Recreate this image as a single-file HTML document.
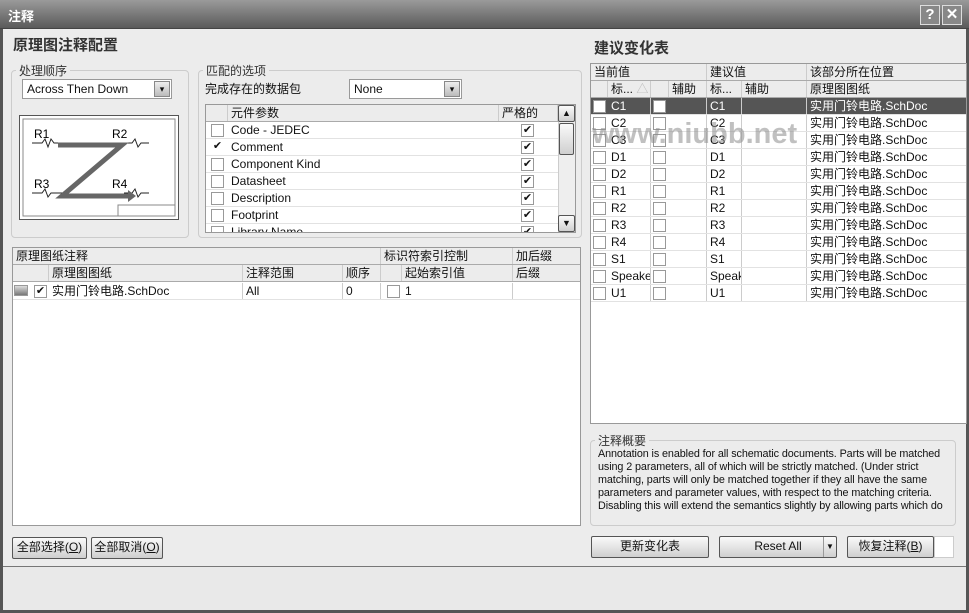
<!DOCTYPE html>
<html><head><meta charset="utf-8"><style>
*{box-sizing:border-box;margin:0;padding:0}
body{width:969px;height:613px;background:#ececec;font-family:"Liberation Sans","Noto Sans CJK SC",sans-serif;font-size:12px;color:#111;position:relative;overflow:hidden}
.a{position:absolute}
.tb{left:0;top:0;width:969px;height:29px;background:linear-gradient(#9a9a9a,#5a5a5a);border-bottom:1px solid #444}
.frame{left:0;top:29px;width:969px;height:584px;border-left:3px solid #555;border-right:3px solid #555;border-bottom:3px solid #555}
.grp{border:1px solid #ccc;border-radius:4px}
.gl{background:#ececec;padding:0 3px;color:#333;font-size:12px}
.combo{background:#fff;border:1px solid #999;height:20px;line-height:18px;padding-left:4px}
.dd{position:absolute;right:1px;top:1px;width:16px;height:16px;background:linear-gradient(#eee,#bbb);border:1px solid #888;font-size:9px;text-align:center;line-height:14px}
.white{background:#fff;border:1px solid #999}
.row{position:absolute;left:0;right:0;height:17px;border-bottom:1px solid #e2e2e2;line-height:16px;white-space:nowrap;overflow:hidden}
.hd{background:#ececec;border-bottom:1px solid #aaa}
.cell{position:absolute;top:0;height:17px;padding-left:3px;overflow:hidden;border-right:1px solid #ccc}
.cb{position:absolute;width:13px;height:13px;border:1px solid #999;background:#fff;top:2px;font-size:11px;line-height:11px;text-align:center}
.btn{background:linear-gradient(#fafafa,#cfcfcf);border:1px solid #555;border-radius:2px;text-align:center;line-height:19px;height:22px}
</style></head><body>
<div class="a tb"></div>
<div class="a" style="left:8px;top:6px;color:#fff;font-weight:bold;font-size:13px">注释</div>
<div class="a" style="left:920px;top:5px;width:20px;height:20px;border:1px solid #ddd;background:#888;color:#fff;font-weight:bold;text-align:center;line-height:18px;font-size:15px">?</div>
<div class="a" style="left:942px;top:5px;width:20px;height:20px;border:1px solid #ddd;background:#888;color:#fff;font-weight:bold;text-align:center;line-height:18px;font-size:15px">✕</div>
<div class="a frame"></div>

<div class="a" style="left:13px;top:34px;font-size:15px;font-weight:bold;color:#333">原理图注释配置</div>
<div class="a" style="left:594px;top:37px;font-size:15px;font-weight:bold;color:#333">建议变化表</div>

<!-- group 处理顺序 -->
<div class="a grp" style="left:11px;top:70px;width:178px;height:168px"></div>
<div class="a gl" style="left:16px;top:62px">处理顺序</div>
<div class="a combo" style="left:22px;top:79px;width:150px">Across Then Down<div class="dd">▾</div></div>
<div class="a" style="left:19px;top:115px;width:160px;height:105px;border:1px solid #555;background:#fff">
<svg width="158" height="103" viewBox="0 0 158 103">
<rect x="3" y="3" width="152" height="97" fill="none" stroke="#888"/>
<text x="14" y="22" font-size="12" font-family="Liberation Sans">R1</text>
<text x="92" y="22" font-size="12" font-family="Liberation Sans">R2</text>
<text x="14" y="72" font-size="12" font-family="Liberation Sans">R3</text>
<text x="92" y="72" font-size="12" font-family="Liberation Sans">R4</text>
<path d="M12 27h10l3 -4 3 8 3 -8 3 4h8M104 27h8l3 -4 3 8 3 -4h8M12 77h10l3 -4 3 8 3 -4h12M104 77h8l3 -4 3 8 3 -4h8" fill="none" stroke="#222"/>
<path d="M38 29H102L42 80H112" fill="none" stroke="#666" stroke-width="5"/>
<path d="M108 74l8 6-8 6z" fill="#666"/>
<rect x="98" y="89" width="57" height="11" fill="#fff" stroke="#888"/>
</svg></div>

<!-- group 匹配的选项 -->
<div class="a grp" style="left:198px;top:70px;width:384px;height:168px"></div>
<div class="a gl" style="left:203px;top:62px">匹配的选项</div>
<div class="a" style="left:205px;top:80px">完成存在的数据包</div>
<div class="a combo" style="left:349px;top:79px;width:113px">None<div class="dd">▾</div></div>
<div class="a white" style="left:205px;top:104px;width:371px;height:129px;overflow:hidden">
 <div class="row hd" style="top:0;width:352px"><div class="cell" style="left:0;width:22px"></div><div class="cell" style="left:22px;width:271px">元件参数</div><div class="cell" style="left:293px;width:59px">严格的</div></div>
 <div class="row" style="top:17px;width:352px"><div class="cb" style="left:5px"></div><div class="cell" style="left:22px;width:271px;border:0">Code - JEDEC</div><div class="cb" style="left:315px">✔</div></div>
 <div class="row" style="top:34px;width:352px"><div class="cb" style="left:5px;border:0">✔</div><div class="cell" style="left:22px;width:271px;border:0">Comment</div><div class="cb" style="left:315px">✔</div></div>
 <div class="row" style="top:51px;width:352px"><div class="cb" style="left:5px"></div><div class="cell" style="left:22px;width:271px;border:0">Component Kind</div><div class="cb" style="left:315px">✔</div></div>
 <div class="row" style="top:68px;width:352px"><div class="cb" style="left:5px"></div><div class="cell" style="left:22px;width:271px;border:0">Datasheet</div><div class="cb" style="left:315px">✔</div></div>
 <div class="row" style="top:85px;width:352px"><div class="cb" style="left:5px"></div><div class="cell" style="left:22px;width:271px;border:0">Description</div><div class="cb" style="left:315px">✔</div></div>
 <div class="row" style="top:102px;width:352px"><div class="cb" style="left:5px"></div><div class="cell" style="left:22px;width:271px;border:0">Footprint</div><div class="cb" style="left:315px">✔</div></div>
 <div class="row" style="top:119px;width:352px"><div class="cb" style="left:5px"></div><div class="cell" style="left:22px;width:271px;border:0">Library Name</div><div class="cb" style="left:315px">✔</div></div>
 <div class="a" style="left:352px;top:0;width:17px;height:127px;background:#eee;border-left:1px solid #ccc"></div>
 <div class="a btn" style="left:352px;top:0;width:17px;height:17px;line-height:14px;font-size:9px">▲</div>
 <div class="a btn" style="left:353px;top:18px;width:15px;height:32px"></div>
 <div class="a btn" style="left:352px;top:110px;width:17px;height:17px;line-height:14px;font-size:9px">▼</div>
</div>

<!-- lower left grid -->
<div class="a white" style="left:12px;top:247px;width:569px;height:279px;overflow:hidden">
 <div class="row hd" style="top:0"><div class="cell" style="left:0;width:368px">原理图纸注释</div><div class="cell" style="left:368px;width:132px">标识符索引控制</div><div class="cell" style="left:500px;width:68px;border:0">加后缀</div></div>
 <div class="row hd" style="top:17px"><div class="cell" style="left:0;width:36px"></div><div class="cell" style="left:36px;width:194px">原理图图纸</div><div class="cell" style="left:230px;width:100px">注释范围</div><div class="cell" style="left:330px;width:38px">顺序</div><div class="cell" style="left:368px;width:21px"></div><div class="cell" style="left:389px;width:111px">起始索引值</div><div class="cell" style="left:500px;width:68px;border:0">后缀</div></div>
 <div class="row" style="top:35px"><div class="cb" style="left:1px;width:14px;height:11px;background:linear-gradient(#ddd,#777)"></div><div class="cb" style="left:21px">✔</div><div class="cell" style="left:36px;width:194px">实用门铃电路.SchDoc</div><div class="cell" style="left:230px;width:100px">All</div><div class="cell" style="left:330px;width:38px">0</div><div class="cb" style="left:374px"></div><div class="cell" style="left:389px;width:111px">1</div><div class="cell" style="left:500px;width:68px;border:0"></div></div>
</div>
<div class="a btn" style="left:12px;top:537px;width:75px">全部选择(<u>O</u>)</div>
<div class="a btn" style="left:91px;top:537px;width:72px">全部取消(<u>O</u>)</div>

<!-- right grid -->
<div class="a white" style="left:590px;top:63px;width:377px;height:361px;overflow:hidden">
 <div class="row hd" style="top:0"><div class="cell" style="left:0;width:116px">当前值</div><div class="cell" style="left:116px;width:100px">建议值</div><div class="cell" style="left:216px;width:160px;border:0">该部分所在位置</div></div>
 <div class="row hd" style="top:17px"><div class="cell" style="left:0;width:17px"></div><div class="cell" style="left:17px;width:43px">标... <span style="color:#bbb">△</span></div><div class="cell" style="left:60px;width:18px"></div><div class="cell" style="left:78px;width:38px">辅助</div><div class="cell" style="left:116px;width:35px">标...</div><div class="cell" style="left:151px;width:65px">辅助</div><div class="cell" style="left:216px;width:160px;border:0">原理图图纸</div></div>
 <div id="rr"></div>
</div>
<div class="a" style="left:592px;top:118px;font-size:29px;color:rgba(140,140,140,.55);font-weight:bold;letter-spacing:0px">www.niubb.net</div>

<div class="a grp" style="left:590px;top:440px;width:366px;height:86px"></div>
<div class="a gl" style="left:595px;top:432px">注释概要</div>
<div class="a" style="left:598px;top:448px;width:356px;font-size:10.8px;line-height:13px;color:#111;letter-spacing:-0.1px">Annotation is enabled for all schematic documents. Parts will be matched using 2 parameters, all of which will be strictly matched. (Under strict matching, parts will only be matched together if they all have the same parameters and parameter values, with respect to the matching criteria. Disabling this will extend the semantics slightly by allowing parts which do</div>

<div class="a btn" style="left:591px;top:536px;width:118px">更新变化表</div>
<div class="a btn" style="left:719px;top:536px;width:118px">Reset All<span style="position:absolute;right:0;top:0;width:13px;height:20px;border-left:1px solid #999;font-size:8px">▼</span></div>
<div class="a btn" style="left:847px;top:536px;width:87px">恢复注释(<u>B</u>)</div>
<div class="a" style="left:934px;top:536px;width:20px;height:22px;background:#fff;border:1px solid #ccc"></div>

<div class="a" style="left:3px;top:566px;width:963px;height:1px;background:#777"></div>
<div class="a" style="left:3px;top:567px;width:963px;height:43px;background:#e9e9e9"></div>

<script>
var n=["C1","C2","C3","D1","D2","R1","R2","R3","R4","S1","Speaker","U1"],h="";
n.forEach(function(v,i){var s=i==0,bg=s?"background:#555;color:#fff;":"";
h+='<div class="row" style="top:'+(34+i*17)+'px;'+bg+'"><div class="cb" style="left:2px"></div><div class="cell" style="left:17px;width:43px">'+v+'</div><div class="cb" style="left:62px"></div><div class="cell" style="left:78px;width:38px"></div><div class="cell" style="left:116px;width:35px">'+(v=="Speaker"?"Speak":v)+'</div><div class="cell" style="left:151px;width:65px"></div><div class="cell" style="left:216px;width:160px;border:0">实用门铃电路.SchDoc</div></div>';});
document.getElementById("rr").innerHTML=h;
</script>
</body></html>
